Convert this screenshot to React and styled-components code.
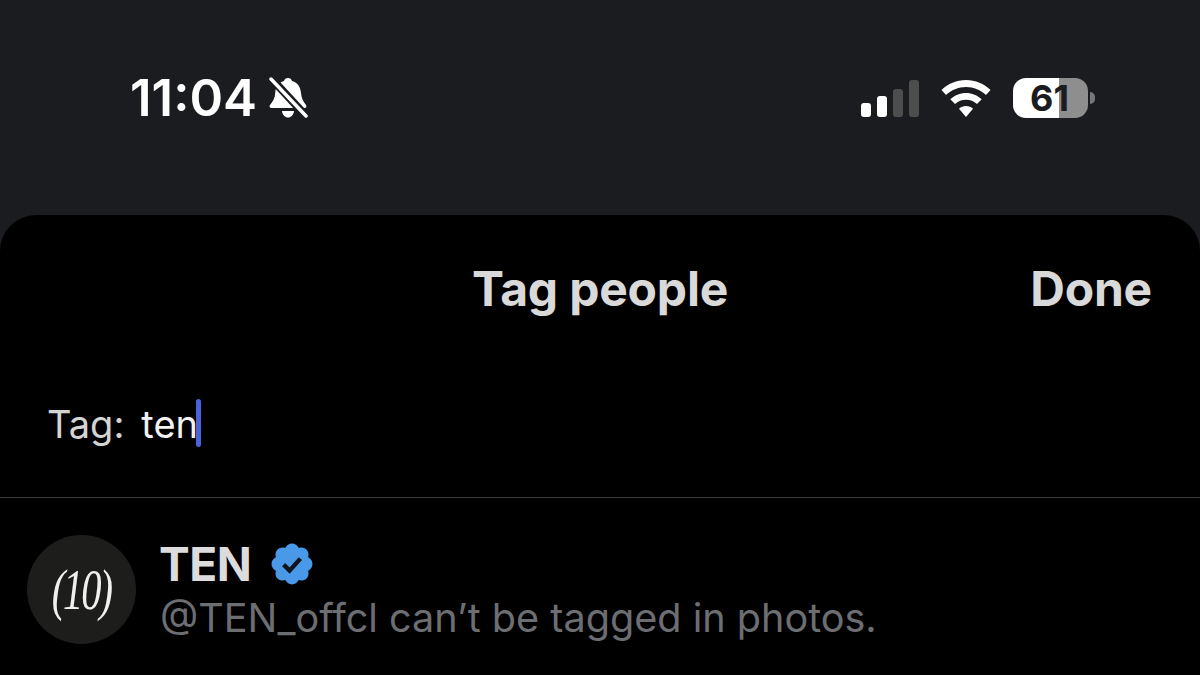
import React from 'react';
import styled, { createGlobalStyle } from 'styled-components';

const GlobalStyle = createGlobalStyle`
  html, body {
    margin: 0;
    padding: 0;
    background: #1b1c20;
  }
  body {
    font-family: "Inter", "Liberation Sans", sans-serif;
  }
`;

const Screen = styled.div`
  width: 1200px;
  height: 675px;
  overflow: hidden;
  display: flex;
  flex-direction: column;
  background: #1b1c20;
`;

const StatusBar = styled.div`
  height: 215px;
  box-sizing: border-box;
  padding: 70px 105px 0 130px;
  display: flex;
  justify-content: space-between;
  align-items: flex-start;
`;

const TimeGroup = styled.div`
  display: flex;
  align-items: center;
  gap: 11px;
  height: 56px;
`;

const Time = styled.div`
  font-size: 51px;
  line-height: 56px;
  font-weight: 600;
  color: #fff;
`;

const StatusIcons = styled.div`
  display: flex;
  align-items: center;
  height: 56px;
  gap: 22px;
`;

const Signal = styled.div`
  display: flex;
  align-items: flex-end;
  gap: 6px;
  height: 37px;
`;

const SignalBar = styled.div`
  width: 10px;
  height: ${p => p.$h}px;
  border-radius: 3px;
  background: ${p => (p.$on ? '#fff' : '#4c4d4d')};
`;

const Battery = styled.div`
  display: flex;
  align-items: center;
  gap: 2px;
`;

const BatteryBody = styled.div`
  width: 75px;
  height: 40px;
  border-radius: 13px;
  background: linear-gradient(to right, #fff 0, #fff 61%, #8e8e8e 61%, #8e8e8e 100%);
  display: flex;
  align-items: center;
  justify-content: center;
  padding-right: 2px;
  box-sizing: border-box;
  font-size: 36px;
  line-height: 40px;
  font-weight: 700;
  color: #1b1c20;
`;

const BatteryTip = styled.div`
  width: 5px;
  height: 12px;
  border-radius: 0 6px 6px 0;
  background: #77777a;
`;

const Sheet = styled.div`
  flex: 1;
  background: #000;
  border-radius: 36px 36px 0 0;
  display: flex;
  flex-direction: column;
`;

const SheetHeader = styled.div`
  position: relative;
  height: 149px;
  box-sizing: border-box;
  padding: 46px 48px 0;
  display: flex;
  justify-content: flex-end;
`;

const Title = styled.div`
  position: absolute;
  left: 0;
  right: 0;
  top: 46px;
  text-align: center;
  font-size: 48px;
  line-height: 56px;
  font-weight: 700;
  letter-spacing: -0.2px;
  color: #d9d9d9;
`;

const DoneButton = styled.div`
  font-size: 48px;
  line-height: 56px;
  font-weight: 700;
  letter-spacing: -0.2px;
  color: #d9d9d9;
`;

const TagRow = styled.div`
  height: 134px;
  box-sizing: border-box;
  padding: 35px 0 0 47px;
  display: flex;
  align-items: flex-start;
  font-size: 38px;
  line-height: 50px;
  border-bottom: 1px solid #3a3b3d;
`;

const TagLabel = styled.span`
  color: #d4d4d4;
  margin-right: 17px;
`;

const TagValue = styled.span`
  color: #f2f2f2;
`;

const Caret = styled.span`
  display: inline-block;
  width: 5px;
  height: 48px;
  margin-left: -2px;
  border-radius: 3px;
  background: #4a63dc;
`;

const ResultRow = styled.div`
  display: flex;
  align-items: flex-start;
  padding: 37px 0 0 27px;
  gap: 24px;
`;

const Avatar = styled.div`
  width: 109px;
  height: 109px;
  border-radius: 50%;
  background: #1d1d1c;
  color: #f0f0f0;
  display: flex;
  align-items: center;
  justify-content: center;
  font-family: "Liberation Serif", serif;
  font-style: italic;
  font-size: 58px;
  letter-spacing: -3px;
`;

const AvatarMark = styled.span`
  display: inline-block;
  transform: scaleX(0.7);
`;

const ResultText = styled.div`
  display: flex;
  flex-direction: column;
  margin-top: 4px;
`;

const NameLine = styled.div`
  display: flex;
  align-items: center;
  gap: 17px;
  height: 50px;
`;

const Name = styled.div`
  margin-left: -1px;
  font-size: 46px;
  line-height: 50px;
  font-weight: 700;
  letter-spacing: -0.5px;
  color: #dcdcdc;
`;

const Handle = styled.div`
  font-size: 39.6px;
  line-height: 58px;
  color: #6c6e72;
`;

const MutedBell = () => (
  <svg width="40" height="42" viewBox="0 0 40 42">
    <path d="M20 1c2 0 3.500 1.300 4 3 6 1.500 8.500 6.500 9 12 .4 5 2 8.500 5 12 1 1.300.2 3-1.500 3H3.500C1.800 31 1 29.300 2 28c3-3.500 5-7 5.200-12C7.500 10.500 10 5.500 16 4c.5-1.700 2-3 4-3z" fill="#fff" />
    <path d="M14 34h12c-.5 4-3 6.500-6 6.500S14.500 38 14 34z" fill="#fff" />
    <path d="M2 0 38 39" stroke="#1b1c20" strokeWidth="8" />
    <path d="M3 2 38 39" stroke="#fff" strokeWidth="3.500" strokeLinecap="round" />
  </svg>
);

const Wifi = () => (
  <svg width="50" height="37" viewBox="0 0 50 37">
    <path d="M25 0c9.500 0 18 3.700 24.500 10L45 15C39.800 10 32.800 7 25 7S10.200 10 5 15L.5 10C7 3.700 15.500 0 25 0z" fill="#fff" />
    <path d="M25 13c6 0 11.500 2.400 15.700 6.300L36 24c-3-2.800-6.800-4.300-11-4.300S17 21.200 14 24l-4.700-4.700C13.500 15.400 19 13 25 13z" fill="#fff" />
    <path d="M25 26c2.700 0 5.200 1 7 2.800L25 37l-7-8.200C19.800 27 22.300 26 25 26z" fill="#fff" />
  </svg>
);

const VerifiedBadge = () => (
  <svg width="48" height="48" viewBox="0 0 24 24">
    <path
      d="M22.250 12c0-1.430-.88-2.670-2.190-3.340.46-1.390.2-2.900-.81-3.910s-2.520-1.270-3.910-.81c-.66-1.310-1.910-2.190-3.340-2.190s-2.670.88-3.330 2.190c-1.400-.46-2.910-.2-3.920.81s-1.260 2.520-.8 3.910C2.630 9.330 1.750 10.570 1.750 12s.88 2.670 2.200 3.340c-.46 1.390-.21 2.900.8 3.910s2.520 1.260 3.910.81c.67 1.310 1.910 2.190 3.340 2.190s2.680-.88 3.340-2.190c1.390.45 2.900.2 3.910-.81s1.270-2.520.81-3.910c1.310-.67 2.190-1.910 2.190-3.340z"
      fill="#4a99e9"
    />
    <path d="M7.800 12.300l3 3 5.400-6" fill="none" stroke="#10141c" strokeWidth="2.200" />
  </svg>
);

const App = () => (
  <Screen>
    <GlobalStyle />
    <StatusBar>
      <TimeGroup>
        <Time>11:04</Time>
        <MutedBell />
      </TimeGroup>
      <StatusIcons>
        <Signal>
          <SignalBar $h={14} $on />
          <SignalBar $h={21} $on />
          <SignalBar $h={28} />
          <SignalBar $h={37} />
        </Signal>
        <Wifi />
        <Battery>
          <BatteryBody>61</BatteryBody>
          <BatteryTip />
        </Battery>
      </StatusIcons>
    </StatusBar>
    <Sheet>
      <SheetHeader>
        <Title>Tag people</Title>
        <DoneButton>Done</DoneButton>
      </SheetHeader>
      <TagRow>
        <TagLabel>Tag:</TagLabel>
        <TagValue>ten</TagValue>
        <Caret />
      </TagRow>
      <ResultRow>
        <Avatar><AvatarMark>(10)</AvatarMark></Avatar>
        <ResultText>
          <NameLine>
            <Name>TEN</Name>
            <VerifiedBadge />
          </NameLine>
          <Handle>@TEN_offcl can’t be tagged in photos.</Handle>
        </ResultText>
      </ResultRow>
    </Sheet>
  </Screen>
);

export default App;
